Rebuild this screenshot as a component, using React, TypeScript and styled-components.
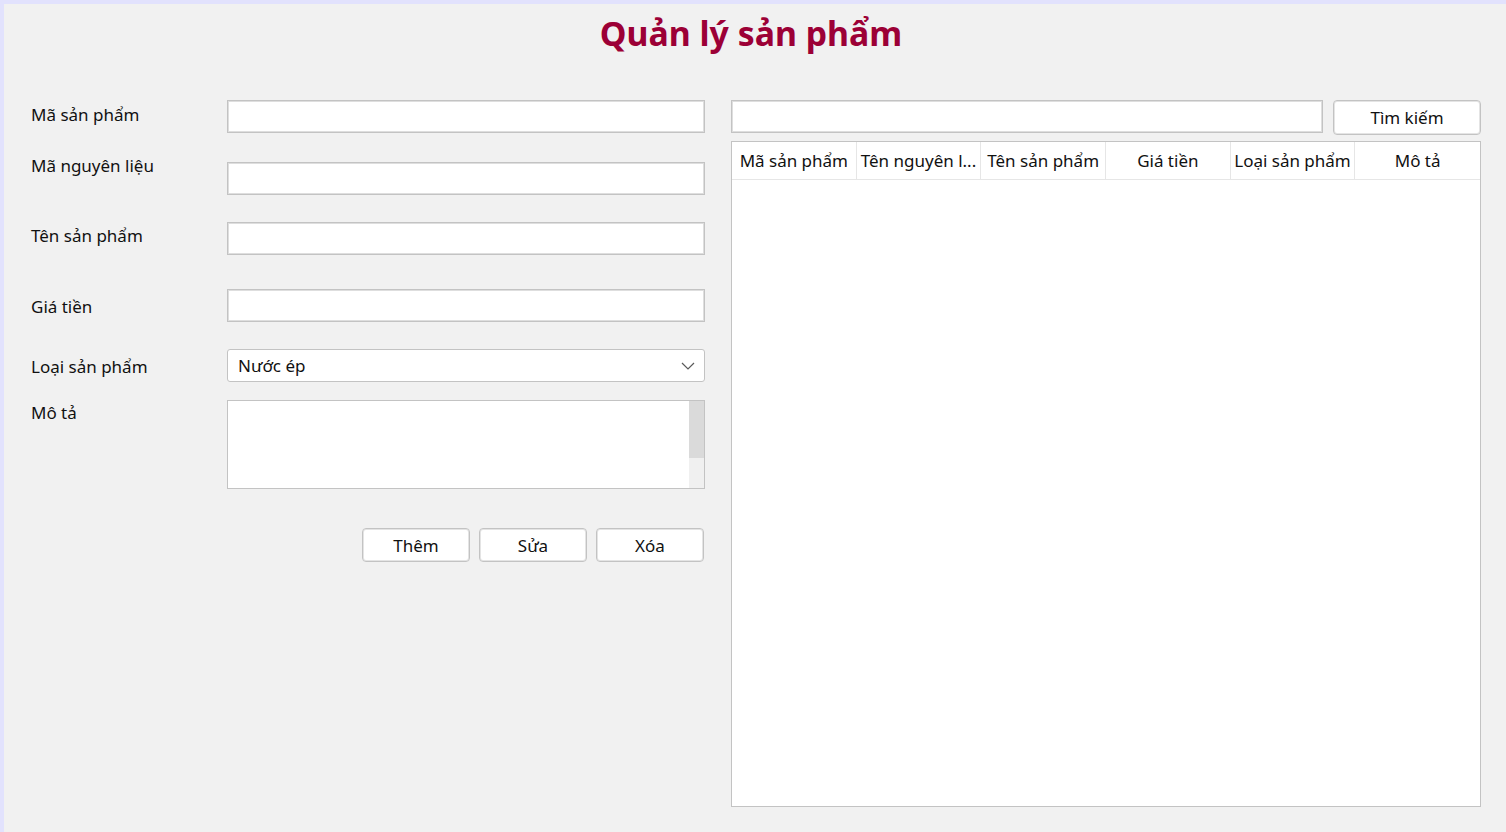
import { FC } from 'react'
import styled, { createGlobalStyle } from 'styled-components'

const GlobalStyle = createGlobalStyle`
  html, body {
    margin: 0;
    padding: 0;
    background: #f1f1f1;
  }
  body {
    font-family: 'Noto Sans', 'Open Sans', sans-serif;
    color: #111;
  }
  * {
    box-sizing: border-box;
  }
`

const Window = styled.div`
  width: 1506px;
  height: 832px;
  background: #f1f1f1;
  border-top: 4px solid #e2e2fd;
  border-left: 4px solid #e2e2fd;
  overflow: hidden;
`

const Title = styled.h1`
  margin: 0;
  height: 96px;
  padding-top: 7px;
  padding-right: 8px;
  text-align: center;
  font-size: 33.8px;
  line-height: 44px;
  font-weight: 700;
  color: #9c0036;
`

const Content = styled.div`
  display: grid;
  grid-template-columns: 674px 750px;
  column-gap: 26px;
  padding-left: 27px;
  align-items: start;
`

const Form = styled.div`
  display: flex;
  flex-direction: column;
`

const FieldRow = styled.div<{ $top: number; $height: number }>`
  display: grid;
  grid-template-columns: 196px 478px;
  margin-top: ${p => p.$top}px;
  height: ${p => p.$height}px;
`

const Label = styled.label<{ $offset: number }>`
  font-size: 17px;
  line-height: 24px;
  align-self: start;
  margin-top: ${p => p.$offset}px;
`

const TextInput = styled.input`
  width: 100%;
  height: 100%;
  border: 1px solid #c3c3c3;
  box-shadow: inset 0 0 0 1px #dedede;
  background: #fff;
  font: inherit;
  font-size: 17px;
  padding: 0 8px;
  outline: none;
`

const Combo = styled.div`
  display: flex;
  align-items: center;
  justify-content: space-between;
  height: 100%;
  border: 1px solid #c3c3c3;
  border-radius: 3px;
  background: #fff;
  padding: 0 9px 0 10px;
  font-size: 17px;
`

const Memo = styled.div`
  display: flex;
  height: 100%;
  border: 1px solid #c3c3c3;
  background: #fff;
`

const MemoText = styled.textarea`
  flex: 1;
  border: none;
  outline: none;
  resize: none;
  overflow: hidden;
  font: inherit;
  font-size: 17px;
  padding: 4px 8px;
`

const ScrollRail = styled.div`
  width: 15px;
  display: flex;
  flex-direction: column;
  background: #f0f0f0;
`

const ScrollThumb = styled.div`
  height: 57px;
  background: #dadada;
`

const ButtonBar = styled.div`
  display: flex;
  justify-content: flex-end;
  gap: 9px;
  margin-top: 39px;
  padding-right: 1px;
`

const Button = styled.button<{ $width: number; $height: number }>`
  width: ${p => p.$width}px;
  height: ${p => p.$height}px;
  border: 1px solid #c3c3c3;
  box-shadow: inset 0 0 0 1px #e4e4e4;
  border-radius: 4px;
  background: #fff;
  font: inherit;
  font-size: 17px;
  color: #111;
  padding: 0;
`

const Side = styled.div`
  display: flex;
  flex-direction: column;
`

const SearchBar = styled.div`
  display: flex;
  align-items: flex-start;
  gap: 10px;
`

const SearchInput = styled(TextInput)`
  width: 592px;
  height: 33px;
`

const Table = styled.div`
  margin-top: 6px;
  height: 666px;
  border: 1px solid #c3c3c3;
  background: #fff;
`

const HeaderRow = styled.div`
  display: grid;
  grid-template-columns: repeat(6, 1fr);
  height: 38px;
  border-bottom: 1px solid #e6e6e6;
`

const HeaderCell = styled.div`
  display: flex;
  align-items: center;
  justify-content: center;
  padding: 0 4px;
  border-right: 1px solid #e6e6e6;
  font-size: 17px;
  white-space: nowrap;
  overflow: hidden;
  &:last-child {
    border-right: none;
  }
`

const Chevron: FC = () => (
  <svg width='14' height='8' viewBox='0 0 14 8'>
    <polyline points='1,1 7,7 13,1' fill='none' stroke='#5a5a5a' strokeWidth='1.2' />
  </svg>
)

const columns = ['Mã sản phẩm', 'Tên nguyên l...', 'Tên sản phẩm', 'Giá tiền', 'Loại sản phẩm', 'Mô tả']

const App: FC = () => {
  return (
    <Window>
      <GlobalStyle />
      <Title>Quản lý sản phẩm</Title>
      <Content>
        <Form>
          <FieldRow $top={0} $height={33}>
            <Label $offset={3}>Mã sản phẩm</Label>
            <TextInput />
          </FieldRow>
          <FieldRow $top={29} $height={33}>
            <Label $offset={-8}>Mã nguyên liệu</Label>
            <TextInput />
          </FieldRow>
          <FieldRow $top={27} $height={33}>
            <Label $offset={2}>Tên sản phẩm</Label>
            <TextInput />
          </FieldRow>
          <FieldRow $top={34} $height={33}>
            <Label $offset={6}>Giá tiền</Label>
            <TextInput />
          </FieldRow>
          <FieldRow $top={27} $height={33}>
            <Label $offset={6}>Loại sản phẩm</Label>
            <Combo>
              <span>Nước ép</span>
              <Chevron />
            </Combo>
          </FieldRow>
          <FieldRow $top={18} $height={89}>
            <Label $offset={1}>Mô tả</Label>
            <Memo>
              <MemoText />
              <ScrollRail>
                <ScrollThumb />
              </ScrollRail>
            </Memo>
          </FieldRow>
          <ButtonBar>
            <Button $width={108} $height={34}>Thêm</Button>
            <Button $width={108} $height={34}>Sửa</Button>
            <Button $width={108} $height={34}>Xóa</Button>
          </ButtonBar>
        </Form>
        <Side>
          <SearchBar>
            <SearchInput />
            <Button $width={148} $height={35}>Tìm kiếm</Button>
          </SearchBar>
          <Table>
            <HeaderRow>
              {columns.map(c => (
                <HeaderCell key={c}>{c}</HeaderCell>
              ))}
            </HeaderRow>
          </Table>
        </Side>
      </Content>
    </Window>
  )
}

export default App
